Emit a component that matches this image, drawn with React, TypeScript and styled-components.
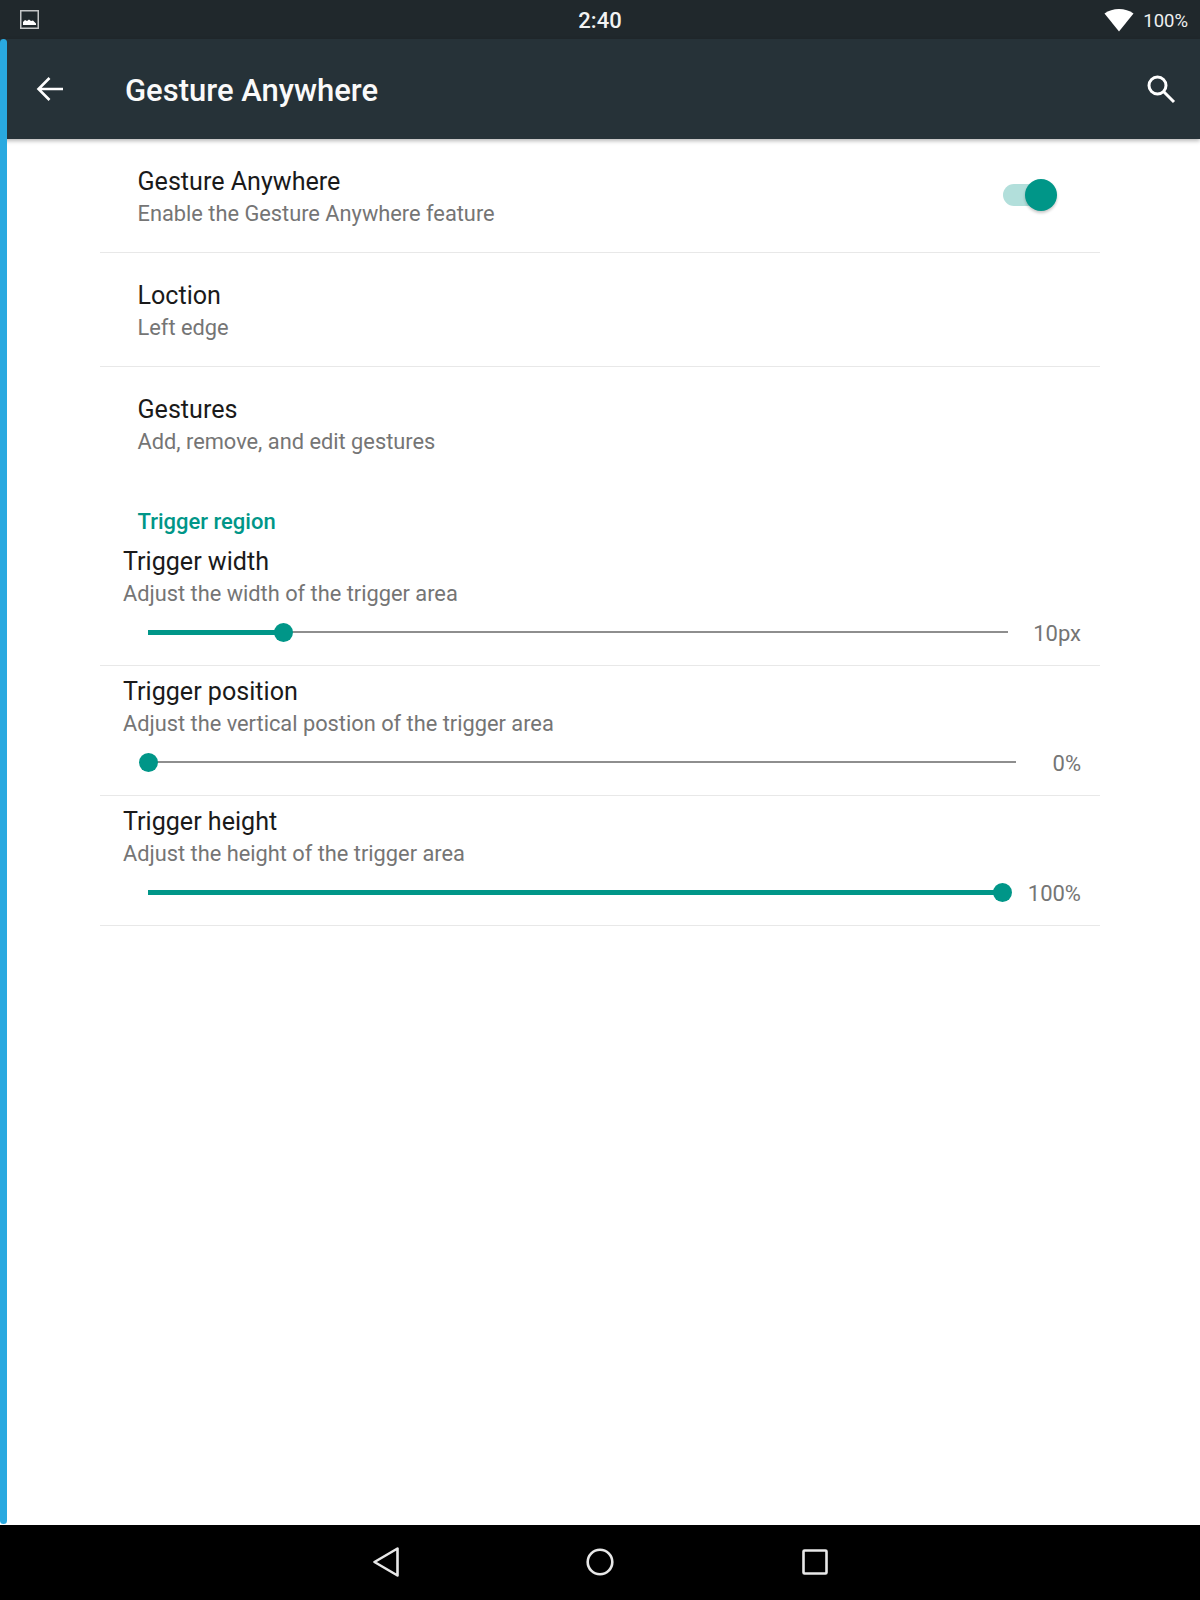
import React from "react";
import styled, { createGlobalStyle } from "styled-components";

const Global = createGlobalStyle`
  html, body { margin: 0; padding: 0; background: #fff; }
  body { font-family: Roboto, "Liberation Sans", sans-serif; }
`;

const Screen = styled.div`
  position: relative;
  width: 1200px;
  height: 1600px;
  display: flex;
  flex-direction: column;
  overflow: hidden;
  background: #fff;
`;

const StatusBar = styled.div`
  height: 39px;
  flex: none;
  background: #20282c;
  display: grid;
  grid-template-columns: minmax(0, 1fr) auto minmax(0, 1fr);
  align-items: center;
  padding: 0 12px 0 20px;
  color: #fff;
`;
const StatusLeft = styled.div`
  display: flex;
  align-items: center;
`;
const StatusRight = styled.div`
  display: flex;
  align-items: center;
  justify-content: flex-end;
  gap: 9px;
`;
const Clock = styled.span`
  font-size: 22px;
  font-weight: 500;
  color: #f2f3f3;
  position: relative;
  left: -4px;
  top: 1px;
`;
const Battery = styled.span`
  font-size: 18.5px;
  color: #eef0f0;
  position: relative;
  top: 1px;
`;

const AppBar = styled.header`
  height: 100px;
  flex: none;
  background: #263238;
  display: flex;
  align-items: center;
  box-shadow: 0 2px 4px rgba(0, 0, 0, 0.28);
  padding: 0 24px 0 36px;
  position: relative;
  z-index: 1;
`;
const AppTitle = styled.h1`
  flex: 1;
  margin: 0 0 0 61px;
  font-size: 31px;
  font-weight: 500;
  color: #fafafa;
  position: relative;
  top: 1px;
`;

const List = styled.main`
  flex: 1;
  display: flex;
  flex-direction: column;
  padding: 0 100px;
`;
const Row = styled.section<{ $divider?: boolean }>`
  height: 114px;
  box-sizing: border-box;
  flex: none;
  display: flex;
  align-items: center;
  padding: 0 50px 0 37.5px;
  border-bottom: 1px solid ${(p) => (p.$divider ? "#e8e8e8" : "transparent")};
`;
const RowText = styled.div`
  flex: 1;
  display: flex;
  flex-direction: column;
  padding-top: 5px;
`;
const Title = styled.div`
  font-size: 25.1px;
  line-height: 32px;
  color: #1a1a1a;
`;
const Summary = styled.div`
  font-size: 21.8px;
  line-height: 32px;
  color: #757575;
`;
const Category = styled.div`
  margin: 26px 0 0 37.5px;
  height: 29px;
  font-size: 22px;
  line-height: 30px;
  font-weight: 500;
  color: #009688;
`;
const SeekRow = styled.section`
  height: 130px;
  box-sizing: border-box;
  flex: none;
  padding: 0 19px 0 23px;
  border-bottom: 1px solid #e8e8e8;
`;
const SeekHead = styled(RowText)`
  padding-top: 10px;
`;
const SeekLine = styled.div`
  display: flex;
  align-items: center;
  height: 32px;
  margin-top: 6px;
`;
const Track = styled.div<{ $end: number }>`
  position: relative;
  margin-left: 25px;
  width: ${(p) => p.$end}px;
  height: 2px;
  background: #8e8e8e;
`;
const Fill = styled.div`
  position: absolute;
  left: 0;
  top: -1px;
  height: 5px;
  background: #009688;
`;
const Thumb = styled.div`
  position: absolute;
  top: -8px;
  width: 19px;
  height: 19px;
  margin-left: -9.5px;
  border-radius: 50%;
  background: #009688;
`;
const SeekValue = styled.div`
  flex: 1;
  text-align: right;
  font-size: 22px;
  color: #757575;
  position: relative;
  top: 1px;
`;

const SwitchTrack = styled.div`
  position: relative;
  width: 47px;
  height: 22px;
  border-radius: 11px;
  background: #b2dfdb;
  margin-top: -1px;
`;
const SwitchKnob = styled.div`
  position: absolute;
  right: -7px;
  top: -5px;
  width: 32px;
  height: 32px;
  border-radius: 50%;
  background: #009688;
  box-shadow: 0 2px 3px rgba(0, 0, 0, 0.22);
`;

const NavBar = styled.nav`
  height: 75px;
  flex: none;
  background: #000;
  display: flex;
  align-items: center;
  justify-content: center;
  gap: 187.5px;
  padding-bottom: 1px;
  box-sizing: border-box;
`;
const EdgeStrip = styled.div`
  position: absolute;
  left: 0;
  top: 39px;
  bottom: 76px;
  width: 7px;
  background: #29a9e0;
  border-radius: 4px;
  z-index: 2;
`;

const ImageIcon = () => (
  <svg width="19" height="19" viewBox="0 0 19 19">
    <rect x="0.75" y="0.75" width="17.5" height="17.5" fill="none" stroke="#c4c6c7" strokeWidth="1.5" />
    <path d="M3 15v-3l2-2 2 1 2-1.5 2 1.5 2-.5 3 3V15z" fill="#fff" />
  </svg>
);
const WifiIcon = () => (
  <svg width="30" height="24" viewBox="0 0 30 24">
    <path d="M15 23.5 0.5 5.5C4.5 2.5 9.5 1 15 1s10.500 1.500 14.500 4.500z" fill="#fff" />
  </svg>
);
const BackIcon = () => (
  <svg width="28" height="26" viewBox="0 0 28 26" fill="none" stroke="#fff" strokeWidth="2.6">
    <path d="M27 13H3M13.500 2 2.500 13l11 11" />
  </svg>
);
const SearchIcon = () => (
  <svg width="30" height="30" viewBox="0 0 30 30" fill="none" stroke="#fff" strokeWidth="3">
    <circle cx="11.500" cy="11.500" r="8.500" />
    <path d="M17.500 17.500 28 28" />
  </svg>
);
const NavBack = () => (
  <svg width="26" height="30" viewBox="0 0 26 30" fill="none" stroke="#e8e8e8" strokeWidth="2.600" strokeLinejoin="round">
    <path d="M24.500 1.500v27L1.500 15z" />
  </svg>
);
const NavHome = () => (
  <svg width="28" height="28" viewBox="0 0 28 28" fill="none" stroke="#e8e8e8" strokeWidth="2.600">
    <circle cx="14" cy="14" r="12.300" />
  </svg>
);
const NavRecent = () => (
  <svg width="26" height="26" viewBox="0 0 26 26" fill="none" stroke="#e8e8e8" strokeWidth="2.600" strokeLinejoin="round">
    <rect x="1.500" y="1.500" width="23" height="23" rx="1" />
  </svg>
);

const seekBars = [
  { title: "Trigger width", summary: "Adjust the width of the trigger area", end: 860, pos: 135, value: "10px" },
  { title: "Trigger position", summary: "Adjust the vertical postion of the trigger area", end: 868, pos: 0, value: "0%" },
  { title: "Trigger height", summary: "Adjust the height of the trigger area", end: 854, pos: 854, value: "100%" },
];

export default function App() {
  return (
    <Screen>
      <Global />
      <StatusBar>
        <StatusLeft>
          <ImageIcon />
        </StatusLeft>
        <Clock>2:40</Clock>
        <StatusRight>
          <WifiIcon />
          <Battery>100%</Battery>
        </StatusRight>
      </StatusBar>
      <AppBar>
        <BackIcon />
        <AppTitle>Gesture Anywhere</AppTitle>
        <SearchIcon />
      </AppBar>
      <List>
        <Row $divider>
          <RowText>
            <Title>Gesture Anywhere</Title>
            <Summary>Enable the Gesture Anywhere feature</Summary>
          </RowText>
          <SwitchTrack>
            <SwitchKnob />
          </SwitchTrack>
        </Row>
        <Row $divider>
          <RowText>
            <Title>Loction</Title>
            <Summary>Left edge</Summary>
          </RowText>
        </Row>
        <Row>
          <RowText>
            <Title>Gestures</Title>
            <Summary>Add, remove, and edit gestures</Summary>
          </RowText>
        </Row>
        <Category>Trigger region</Category>
        {seekBars.map((s) => (
          <SeekRow key={s.title}>
            <SeekHead>
              <Title>{s.title}</Title>
              <Summary>{s.summary}</Summary>
            </SeekHead>
            <SeekLine>
              <Track $end={s.end}>
                <Fill style={{ width: s.pos }} />
                <Thumb style={{ left: s.pos }} />
              </Track>
              <SeekValue>{s.value}</SeekValue>
            </SeekLine>
          </SeekRow>
        ))}
      </List>
      <NavBar>
        <NavBack />
        <NavHome />
        <NavRecent />
      </NavBar>
      <EdgeStrip />
    </Screen>
  );
}
